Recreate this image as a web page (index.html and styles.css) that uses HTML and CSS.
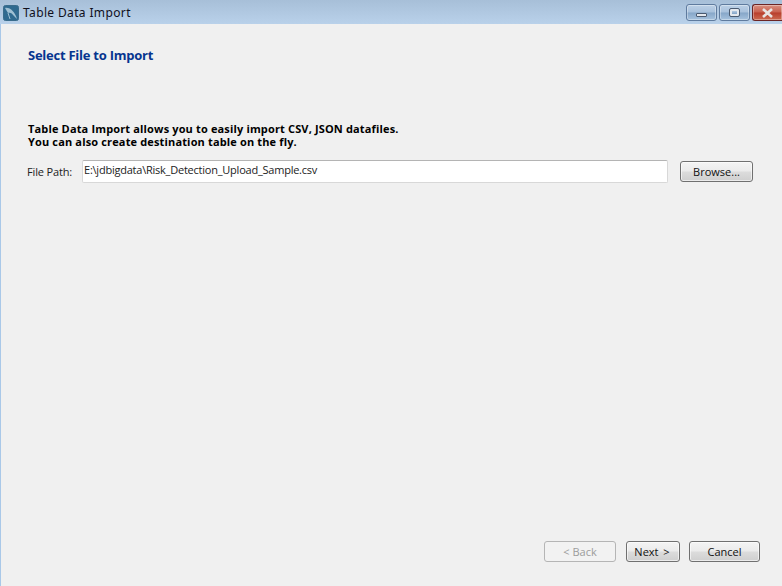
FILE: index.html
```html
<!DOCTYPE html>
<html lang="en">
<head>
<meta charset="utf-8">
<title>Table Data Import</title>
<link rel="stylesheet" href="styles.css">
</head>
<body>
<div class="window">
  <header class="titlebar">
    <svg class="app-icon" width="16" height="16" viewBox="0 0 16 16">
      <rect x="0.5" y="0.5" width="15" height="15" rx="2" fill="#2f6a90" stroke="#3a6c8c"/>
      <path d="M2 3C7 2 12 7 14 14L11 11C9 8 7 7 5 8C4 6 3 5 2 3Z" fill="#9fc0d4"/>
      <path d="M5 8L7 14" stroke="#9fc0d4" fill="none"/>
    </svg>
    <span class="title">Table Data Import</span>
    <div class="controls">
      <div class="ctl"><span class="glyph-min"></span></div>
      <div class="ctl"><span class="glyph-max"></span></div>
      <div class="ctl ctl-close">
        <svg width="13" height="10" viewBox="0 0 13 10"><path d="M2 1L11 9M11 1L2 9" stroke="#e8e4e2" stroke-width="2.6"/></svg>
      </div>
    </div>
  </header>
  <main class="content">
    <h1 class="heading">Select File to Import</h1>
    <p class="desc">Table Data Import allows you to easily import CSV, JSON datafiles.<br>You can also create destination table on the fly.</p>
    <div class="path-row">
      <label class="path-label">File Path:</label>
      <div class="path-input">E:\jdbigdata\Risk_Detection_Upload_Sample.csv</div>
      <button class="btn btn-browse">Browse...</button>
    </div>
    <footer class="actions">
      <button class="btn btn-back" disabled>&lt; Back</button>
      <button class="btn btn-next">Next &gt;</button>
      <button class="btn btn-cancel">Cancel</button>
    </footer>
  </main>
</div>
</body>
</html>
```
FILE: styles.css
```css
html, body {
  margin: 0;
  padding: 0;
}
body {
  width: 782px;
  height: 586px;
  overflow: hidden;
  font-family: "Open Sans", "Noto Sans", sans-serif;
  font-size: 11px;
  color: #111;
}
.window {
  width: 782px;
  height: 586px;
  display: flex;
  flex-direction: column;
  background: #f0f0f0;
  border-left: 1px solid #a9c8e8;
  box-sizing: border-box;
}
.titlebar {
  height: 24px;
  margin-left: -1px;
  display: flex;
  align-items: flex-start;
  background: linear-gradient(#a7bfd8, #b9d1ea);
}
.app-icon {
  margin: 5px 0 0 3px;
}
.title {
  margin: 4px 0 0 4px;
  font-family: "Noto Sans", sans-serif;
  font-size: 12px;
  letter-spacing: 0.36px;
  line-height: 18px;
  color: #10101c;
}
.controls {
  margin-left: auto;
  display: flex;
  gap: 2px;
  padding-top: 4px;
}
.ctl {
  width: 31px;
  height: 17px;
  box-sizing: border-box;
  border: 1px solid #5f7b9e;
  border-radius: 3px;
  background: linear-gradient(#bcd0e6 0, #a8c1dc 48%, #86a6c8 52%, #a6c2de 100%);
  box-shadow: inset 0 0 0 1px rgba(255,255,255,.35);
  display: flex;
  align-items: center;
  justify-content: center;
}
.glyph-min {
  width: 9px;
  height: 2px;
  margin-top: 5px;
  background: #e4e8ee;
  border: 1px solid #4a5a70;
  border-radius: 1px;
}
.glyph-max {
  width: 5px;
  height: 3px;
  border: 2px solid #e4e8ee;
  outline: 1px solid #4a5a70;
  border-radius: 1px;
}
.ctl-close {
  width: 30px;
  border-color: #6b2525;
  border-right: 0;
  border-radius: 3px 0 0 3px;
  background: linear-gradient(#d99080 0, #c8604e 48%, #b83e2c 52%, #cc6a50 100%);
}
.content {
  flex: 1;
  display: flex;
  flex-direction: column;
  padding: 0 29px 0 27px;
}
.heading {
  margin: 22px 0 0;
  font-size: 13px;
  line-height: 18px;
  font-weight: 700;
  color: #06358f;
  letter-spacing: -0.25px;
}
.desc {
  margin: 58px 0 0;
  font-size: 11px;
  line-height: 13px;
  font-weight: 700;
  letter-spacing: 0.15px;
  color: #000;
}
.path-row {
  margin-top: 11px;
  display: flex;
  align-items: center;
  height: 24px;
}
.path-label {
  width: 54px;
  margin-left: -1px;
  margin-right: 1px;
  margin-top: 1px;
  font-size: 11px;
  letter-spacing: -0.15px;
  color: #222;
}
.path-input {
  width: 586px;
  height: 23px;
  box-sizing: border-box;
  padding: 0 1px;
  line-height: 17px;
  background: #fff;
  border: 1px solid #d8d8d8;
  border-top-color: #b4b4b4;
  border-radius: 2px;
  color: #222;
  font-size: 11px;
  letter-spacing: -0.23px;
}
.btn {
  font-family: inherit;
  font-size: 11px;
  color: #111;
  height: 21px;
  padding: 0;
  box-sizing: border-box;
  border: 1px solid #707070;
  border-radius: 3px;
  background: linear-gradient(#f4f4f4 0, #ebebeb 48%, #dcdcdc 52%, #cfcfcf 100%);
  box-shadow: inset 0 0 0 1px rgba(255,255,255,.6);
}
.btn-browse {
  width: 73px;
  margin-left: 12px;
}
.actions {
  margin-top: auto;
  margin-right: -7px;
  margin-bottom: 24px;
  display: flex;
  justify-content: flex-end;
}
.btn-back {
  width: 72px;
  color: #9c9c9c;
  border-color: #b5b5b5;
  background: #f2f2f2;
  box-shadow: none;
}
.btn-next {
  width: 54px;
  margin-left: 10px;
  padding-right: 2px;
  word-spacing: 2px;
}
.btn-cancel {
  width: 71px;
  margin-left: 9px;
}
```
